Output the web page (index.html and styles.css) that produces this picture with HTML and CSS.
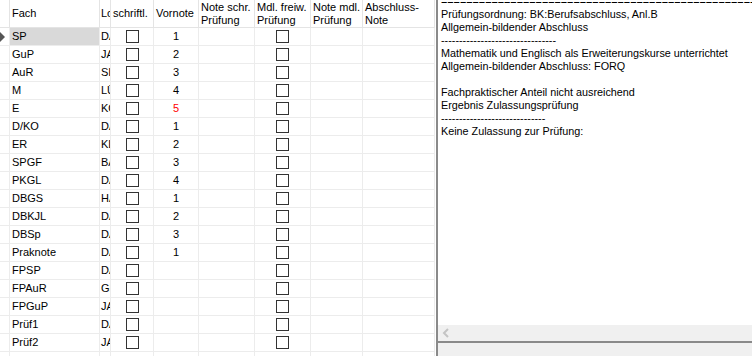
FILE: index.html
```html
<!DOCTYPE html>
<html lang="de">
<head>
<meta charset="utf-8">
<title>Prüfung</title>
<link rel="stylesheet" href="styles.css">
</head>
<body>
<div class="app">
  <div class="grid">
    <div class="row head">
      <div class="c c0"></div>
      <div class="c c1">Fach</div>
      <div class="c c2">Lo</div>
      <div class="c c3">schriftl.</div>
      <div class="c c4">Vornote</div>
      <div class="c c5">Note schr.<br>Prüfung</div>
      <div class="c c6">Mdl. freiw.<br>Prüfung</div>
      <div class="c c7">Note mdl.<br>Prüfung</div>
      <div class="c c8">Abschluss-<br>Note</div>
    </div>
    <div class="row">
      <div class="c c0"><span class="ind"></span></div>
      <div class="c c1 sel">SP</div>
      <div class="c c2">DA</div>
      <div class="c c3"><span class="cb"></span></div>
      <div class="c c4">1</div>
      <div class="c c5"></div>
      <div class="c c6"><span class="cb"></span></div>
      <div class="c c7"></div>
      <div class="c c8"></div>
    </div>
    <div class="row">
      <div class="c c0"></div>
      <div class="c c1">GuP</div>
      <div class="c c2">JA</div>
      <div class="c c3"><span class="cb"></span></div>
      <div class="c c4">2</div>
      <div class="c c5"></div>
      <div class="c c6"><span class="cb"></span></div>
      <div class="c c7"></div>
      <div class="c c8"></div>
    </div>
    <div class="row">
      <div class="c c0"></div>
      <div class="c c1">AuR</div>
      <div class="c c2">SI</div>
      <div class="c c3"><span class="cb"></span></div>
      <div class="c c4">3</div>
      <div class="c c5"></div>
      <div class="c c6"><span class="cb"></span></div>
      <div class="c c7"></div>
      <div class="c c8"></div>
    </div>
    <div class="row">
      <div class="c c0"></div>
      <div class="c c1">M</div>
      <div class="c c2">LÜ</div>
      <div class="c c3"><span class="cb"></span></div>
      <div class="c c4">4</div>
      <div class="c c5"></div>
      <div class="c c6"><span class="cb"></span></div>
      <div class="c c7"></div>
      <div class="c c8"></div>
    </div>
    <div class="row">
      <div class="c c0"></div>
      <div class="c c1">E</div>
      <div class="c c2">KO</div>
      <div class="c c3"><span class="cb"></span></div>
      <div class="c c4 red">5</div>
      <div class="c c5"></div>
      <div class="c c6"><span class="cb"></span></div>
      <div class="c c7"></div>
      <div class="c c8"></div>
    </div>
    <div class="row">
      <div class="c c0"></div>
      <div class="c c1">D/KO</div>
      <div class="c c2">DA</div>
      <div class="c c3"><span class="cb"></span></div>
      <div class="c c4">1</div>
      <div class="c c5"></div>
      <div class="c c6"><span class="cb"></span></div>
      <div class="c c7"></div>
      <div class="c c8"></div>
    </div>
    <div class="row">
      <div class="c c0"></div>
      <div class="c c1">ER</div>
      <div class="c c2">KL</div>
      <div class="c c3"><span class="cb"></span></div>
      <div class="c c4">2</div>
      <div class="c c5"></div>
      <div class="c c6"><span class="cb"></span></div>
      <div class="c c7"></div>
      <div class="c c8"></div>
    </div>
    <div class="row">
      <div class="c c0"></div>
      <div class="c c1">SPGF</div>
      <div class="c c2">BA</div>
      <div class="c c3"><span class="cb"></span></div>
      <div class="c c4">3</div>
      <div class="c c5"></div>
      <div class="c c6"><span class="cb"></span></div>
      <div class="c c7"></div>
      <div class="c c8"></div>
    </div>
    <div class="row">
      <div class="c c0"></div>
      <div class="c c1">PKGL</div>
      <div class="c c2">DA</div>
      <div class="c c3"><span class="cb"></span></div>
      <div class="c c4">4</div>
      <div class="c c5"></div>
      <div class="c c6"><span class="cb"></span></div>
      <div class="c c7"></div>
      <div class="c c8"></div>
    </div>
    <div class="row">
      <div class="c c0"></div>
      <div class="c c1">DBGS</div>
      <div class="c c2">HA</div>
      <div class="c c3"><span class="cb"></span></div>
      <div class="c c4">1</div>
      <div class="c c5"></div>
      <div class="c c6"><span class="cb"></span></div>
      <div class="c c7"></div>
      <div class="c c8"></div>
    </div>
    <div class="row">
      <div class="c c0"></div>
      <div class="c c1">DBKJL</div>
      <div class="c c2">DA</div>
      <div class="c c3"><span class="cb"></span></div>
      <div class="c c4">2</div>
      <div class="c c5"></div>
      <div class="c c6"><span class="cb"></span></div>
      <div class="c c7"></div>
      <div class="c c8"></div>
    </div>
    <div class="row">
      <div class="c c0"></div>
      <div class="c c1">DBSp</div>
      <div class="c c2">DA</div>
      <div class="c c3"><span class="cb"></span></div>
      <div class="c c4">3</div>
      <div class="c c5"></div>
      <div class="c c6"><span class="cb"></span></div>
      <div class="c c7"></div>
      <div class="c c8"></div>
    </div>
    <div class="row">
      <div class="c c0"></div>
      <div class="c c1">Praknote</div>
      <div class="c c2">DA</div>
      <div class="c c3"><span class="cb"></span></div>
      <div class="c c4">1</div>
      <div class="c c5"></div>
      <div class="c c6"><span class="cb"></span></div>
      <div class="c c7"></div>
      <div class="c c8"></div>
    </div>
    <div class="row">
      <div class="c c0"></div>
      <div class="c c1">FPSP</div>
      <div class="c c2">DA</div>
      <div class="c c3"><span class="cb"></span></div>
      <div class="c c4"></div>
      <div class="c c5"></div>
      <div class="c c6"><span class="cb"></span></div>
      <div class="c c7"></div>
      <div class="c c8"></div>
    </div>
    <div class="row">
      <div class="c c0"></div>
      <div class="c c1">FPAuR</div>
      <div class="c c2">GR</div>
      <div class="c c3"><span class="cb"></span></div>
      <div class="c c4"></div>
      <div class="c c5"></div>
      <div class="c c6"><span class="cb"></span></div>
      <div class="c c7"></div>
      <div class="c c8"></div>
    </div>
    <div class="row">
      <div class="c c0"></div>
      <div class="c c1">FPGuP</div>
      <div class="c c2">JA</div>
      <div class="c c3"><span class="cb"></span></div>
      <div class="c c4"></div>
      <div class="c c5"></div>
      <div class="c c6"><span class="cb"></span></div>
      <div class="c c7"></div>
      <div class="c c8"></div>
    </div>
    <div class="row">
      <div class="c c0"></div>
      <div class="c c1">Prüf1</div>
      <div class="c c2">DA</div>
      <div class="c c3"><span class="cb"></span></div>
      <div class="c c4"></div>
      <div class="c c5"></div>
      <div class="c c6"><span class="cb"></span></div>
      <div class="c c7"></div>
      <div class="c c8"></div>
    </div>
    <div class="row">
      <div class="c c0"></div>
      <div class="c c1">Prüf2</div>
      <div class="c c2">JA</div>
      <div class="c c3"><span class="cb"></span></div>
      <div class="c c4"></div>
      <div class="c c5"></div>
      <div class="c c6"><span class="cb"></span></div>
      <div class="c c7"></div>
      <div class="c c8"></div>
    </div>
    <div class="row">
      <div class="c c0"></div>
      <div class="c c1"></div>
      <div class="c c2"></div>
      <div class="c c3"></div>
      <div class="c c4"></div>
      <div class="c c5"></div>
      <div class="c c6"></div>
      <div class="c c7"></div>
      <div class="c c8"></div>
    </div>
  </div>
  <div class="side">
    <div class="memo">
      <div class="memo-text">
        <div class="ln">=====================================================================</div>
        <div class="ln">Prüfungsordnung: BK:Berufsabschluss, Anl.B</div>
        <div class="ln">Allgemein-bildender Abschluss</div>
        <div class="ln">--------------------------------</div>
        <div class="ln">Mathematik und Englisch als Erweiterungskurse unterrichtet</div>
        <div class="ln">Allgemein-bildender Abschluss: FORQ</div>
        <div class="ln"></div>
        <div class="ln">Fachpraktischer Anteil nicht ausreichend</div>
        <div class="ln">Ergebnis Zulassungsprüfung</div>
        <div class="ln">-----------------------------</div>
        <div class="ln">Keine Zulassung zur Prüfung:</div>
      </div>
      <div class="hscroll">
        <svg class="arrow" width="8" height="10" viewBox="0 0 8 10"><path d="M6 1 L2 5 L6 9" fill="none" stroke="#c4c4c4" stroke-width="2"/></svg>
      </div>
    </div>
    <div class="foot"></div>
  </div>
</div>
</body>
</html>
```

FILE: styles.css
```css
html, body {
  margin: 0;
  padding: 0;
  background: #ffffff;
}
body {
  font-family: "Liberation Sans", Arial, sans-serif;
  font-size: 11px;
  color: #000000;
}
.app {
  display: flex;
  width: 752px;
  height: 356px;
  overflow: hidden;
}
.grid {
  width: 436px;
  flex: none;
  overflow: hidden;
}
.row {
  display: flex;
  height: 18px;
}
.row.head {
  height: 28px;
}
.c {
  box-sizing: border-box;
  border-right: 1px solid #ececec;
  border-bottom: 1px solid #ececec;
  overflow: hidden;
  white-space: nowrap;
  display: flex;
  align-items: center;
  padding-left: 2px;
  line-height: 13px;
  flex: none;
}
.head .c {
  border-bottom-color: #e4e4e4;
  border-right-color: #e4e4e4;
}
.c0 { width: 10px; padding-left: 0; }
.c1 { width: 90px; }
.c2 { width: 11px; padding-left: 1px; }
.c3 { width: 43px; justify-content: center; padding-left: 0; }
.c4 { width: 45px; justify-content: center; padding-left: 0; }
.c5 { width: 56px; }
.c6 { width: 56px; }
.c7 { width: 52px; }
.c8 { width: 72px; }
.head .c3 { justify-content: flex-start; padding-left: 2px; }
.head .c4 { justify-content: flex-start; padding-left: 2px; }
.row:not(.head) .c6 { justify-content: center; padding-left: 0; }
.sel {
  background: #d9d9d9;
}
.red {
  color: #ff0000;
}
.cb {
  display: block;
  box-sizing: border-box;
  width: 13px;
  height: 13px;
  border: 1px solid #333333;
  background: #ffffff;
}
.ind {
  display: block;
  width: 0;
  height: 0;
  border-top: 5px solid transparent;
  border-bottom: 5px solid transparent;
  border-left: 5px solid #555555;
}
.side {
  flex: 1;
  display: flex;
  flex-direction: column;
  border-left: 2px solid #8a8a8a;
}
.memo {
  box-sizing: border-box;
  height: 343px;
  border-bottom: 2px solid #8a8a8a;
  display: flex;
  flex-direction: column;
  background: #ffffff;
}
.memo-text {
  flex: 1;
  overflow: hidden;
  padding-left: 3px;
  font-size: 10.8px;
}
.ln {
  height: 13px;
  line-height: 13px;
  white-space: pre;
}
.ln:first-child {
  margin-top: -5px;
}
.hscroll {
  height: 16px;
  background: #f0f0f0;
  display: flex;
  align-items: center;
  padding-left: 4px;
}
.foot {
  flex: 1;
  background: #f0f0f0;
}
```
